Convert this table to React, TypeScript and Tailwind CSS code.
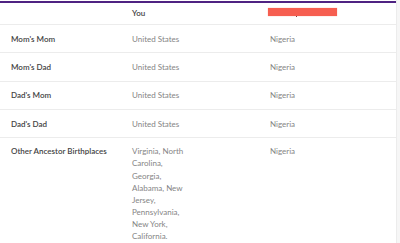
import React from 'react';

interface Row {
  label: string;
  you: string;
  other: string;
}

const rows: Row[] = [
  { label: "Mom's Mom", you: 'United States', other: 'Nigeria' },
  { label: "Mom's Dad", you: 'United States', other: 'Nigeria' },
  { label: "Dad's Mom", you: 'United States', other: 'Nigeria' },
  { label: "Dad's Dad", you: 'United States', other: 'Nigeria' },
];

const font = { fontFamily: 'Lato, "Open Sans", sans-serif' };

const App: React.FC = () => {
  return (
    <div className="flex w-[400px] h-[243px] bg-[#f6f6f6] overflow-hidden" style={font}>
      <div className="w-[397px] h-full bg-white border-r border-[#ececec] pt-px">
        <div className="border-t-2 border-[#4f2382]" />

        {/* header */}
        <div className="grid grid-cols-[132px_138px_1fr] h-[22px] items-center border-b border-[#ececec] text-[8px]">
          <div />
          <div className="font-semibold text-[#444] -mt-[2px]">You</div>
          <div className="relative">
            <div className="w-[69px] h-[8px] bg-[#f65e50] -mt-[3px] -ml-[2px] shadow-[0_0_1px_#f9a39b]" />
            <div className="absolute left-[26px] top-[5px] w-px h-px bg-[#7a4040]" />
          </div>
        </div>

        {rows.map((r) => (
          <div
            key={r.label}
            className="grid grid-cols-[132px_138px_1fr] h-[28.3px] items-center border-b border-[#ececec] text-[8px]"
          >
            <div className="pl-[11px] font-semibold text-[#444]">{r.label}</div>
            <div className="text-[#858585]">{r.you}</div>
            <div className="text-[#858585]">{r.other}</div>
          </div>
        ))}

        <div className="grid grid-cols-[132px_138px_1fr] items-start pt-[7px] text-[8px] leading-[12.15px]">
          <div className="pl-[11px] font-semibold text-[#444]">Other Ancestor Birthplaces</div>
          <div className="w-[56px] text-[#858585]">
            Virginia, North Carolina, Georgia, Alabama, New Jersey, Pennsylvania, New York, California.
          </div>
          <div className="text-[#858585]">Nigeria</div>
        </div>
      </div>
    </div>
  );
};

export default App;
